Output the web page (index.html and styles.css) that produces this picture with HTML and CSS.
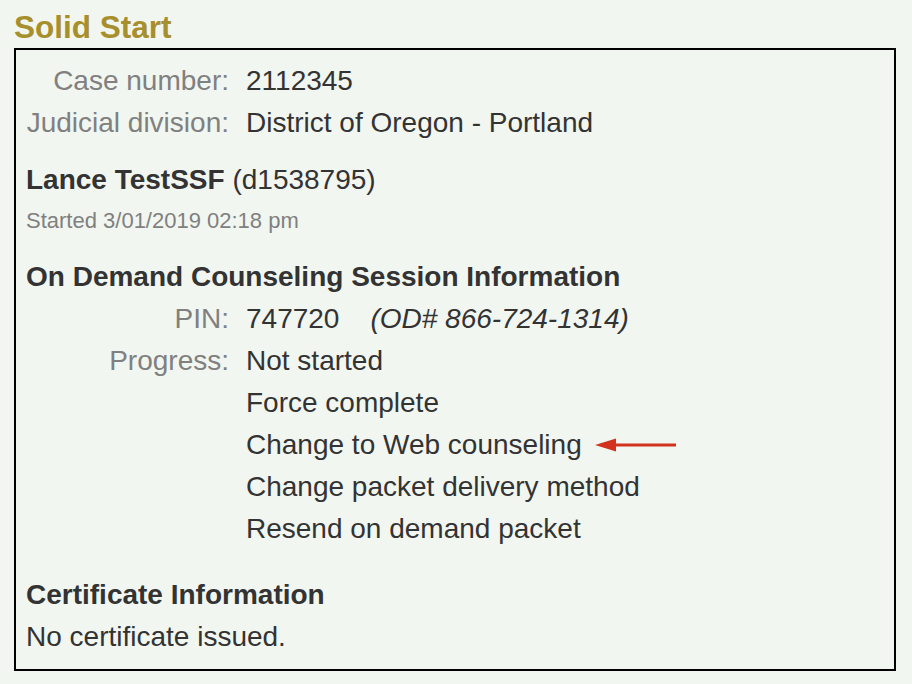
FILE: index.html
```html
<!DOCTYPE html>
<html>
<head>
<meta charset="utf-8">
<link rel="stylesheet" href="styles.css">
</head>
<body>
<h2 class="title">Solid Start</h2>
<div class="box">
  <div class="grid">
    <div class="label">Case number:</div><div class="value">2112345</div>
    <div class="label">Judicial division:</div><div class="value">District of Oregon - Portland</div>
  </div>
  <div class="name"><b>Lance TestSSF</b> (d1538795)</div>
  <div class="started">Started 3/01/2019 02:18 pm</div>
  <div class="heading">On Demand Counseling Session Information</div>
  <div class="grid">
    <div class="label">PIN:</div><div class="value">747720<i class="od">(OD# 866-724-1314)</i></div>
    <div class="label">Progress:</div><div class="value">Not started</div>
    <div class="label"></div><div class="value">Force complete</div>
    <div class="label"></div><div class="value">Change to Web counseling<svg class="arrow" width="82" height="16" viewBox="0 0 82 16"><polygon points="0,8 21,1.5 21,14.5" fill="#d2321d"/><rect x="19" y="6.5" width="62" height="3" fill="#d2321d"/></svg></div>
    <div class="label"></div><div class="value">Change packet delivery method</div>
    <div class="label"></div><div class="value">Resend on demand packet</div>
  </div>
  <div class="heading cert">Certificate Information</div>
  <div class="text">No certificate issued.</div>
</div>
</body>
</html>
```
FILE: styles.css
```css
html, body {
  margin: 0;
  padding: 0;
  background: #f2f6f0;
}
body {
  font-family: "Liberation Sans", Arial, Helvetica, sans-serif;
  color: #333;
  width: 912px;
  height: 684px;
  overflow: hidden;
}
.title {
  margin: 0;
  padding: 8px 0 0 14px;
  font-size: 31.5px;
  line-height: 38px;
  height: 40px;
  color: #a88f2d;
  font-weight: bold;
}
.box {
  margin-left: 14px;
  border: 2px solid #000;
  padding: 10px 0 0 10px;
  box-sizing: content-box;
  width: 868px;
  height: 609px;
  font-size: 28px;
}
.grid {
  display: grid;
  grid-template-columns: 203px 1fr;
  column-gap: 17px;
  line-height: 42px;
}
.label {
  text-align: right;
  color: #808080;
}
.value {
  color: #333;
  display: flex;
  align-items: center;
}
.od {
  margin-left: 31px;
}
.arrow {
  margin-left: 13px;
}
.name {
  margin-top: 15px;
  line-height: 42px;
}
.name b {
  font-weight: bold;
}
.started {
  font-size: 22px;
  line-height: 40px;
  color: #808080;
}
.heading {
  margin-top: 15px;
  line-height: 42px;
  font-weight: bold;
}
.heading.cert {
  margin-top: 24px;
}
.text {
  line-height: 42px;
}
```
